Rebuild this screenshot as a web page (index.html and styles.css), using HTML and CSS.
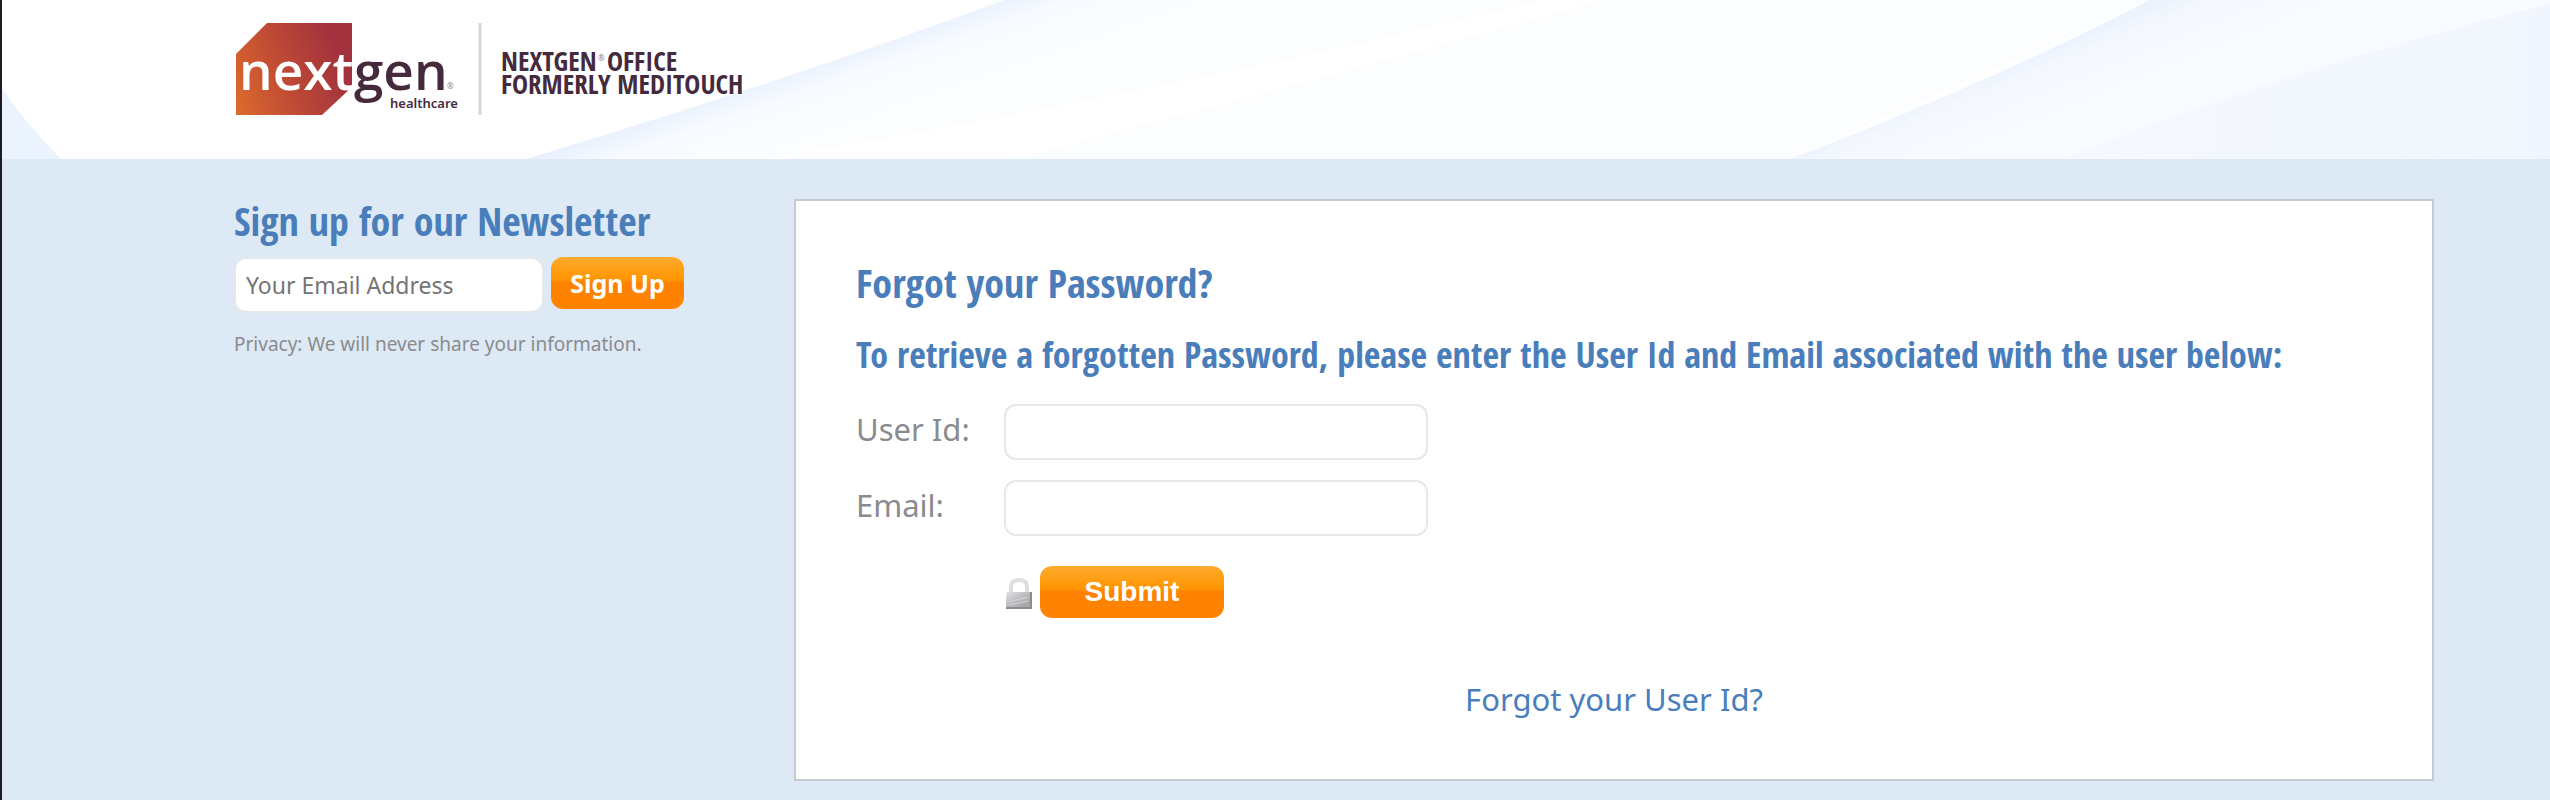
FILE: index.html
```
<!DOCTYPE html>
<html lang="en">
<head>
  <meta charset="UTF-8">
  <meta name="viewport" content="width=device-width, initial-scale=1">
  <title>Forgot your Password?</title>
  <link rel="stylesheet" href="styles.css">
</head>
<body>
  <header class="header">
    <!-- Light blue rays behind the logo -->
    <svg class="rays" viewBox="0 0 2548 159" preserveAspectRatio="none" aria-hidden="true">
      <defs>
        <linearGradient id="rayOne" gradientUnits="userSpaceOnUse" x1="760" y1="78" x2="785" y2="150">
          <stop offset="0" stop-color="#e8f1fe"/>
          <stop offset="0.35" stop-color="#f7faff"/>
          <stop offset="1" stop-color="#fcfdff"/>
        </linearGradient>
        <linearGradient id="rayTwo" gradientUnits="userSpaceOnUse" x1="1965" y1="79" x2="1990" y2="140">
          <stop offset="0" stop-color="#ebf2fe"/>
          <stop offset="0.3" stop-color="#f4f8fe"/>
          <stop offset="1" stop-color="#f8fbff"/>
        </linearGradient>
        <linearGradient id="rayThree" x1="0" y1="0" x2="1" y2="0">
          <stop offset="0" stop-color="#f5f9fe"/>
          <stop offset="1" stop-color="#f1f6fe"/>
        </linearGradient>
      </defs>
      <path d="M0 88 Q22 122 59 159 H0Z" fill="#ebf3ff"/>
      <path d="M524 159 Q780 82 1003 0 H1540 Q1180 90 760 159Z" fill="url(#rayOne)"/>
      <path d="M1010 159 Q1310 82 1600 0 H2148 L1788 159Z" fill="#fcfdff"/>
      <path d="M1788 159 Q1990 82 2148 0 H2548 V159Z" fill="url(#rayTwo)"/>
      <path d="M2060 159 Q2280 70 2548 4 V159Z" fill="url(#rayThree)"/>
    </svg>
    <svg class="logo" viewBox="0 0 520 93" role="img" aria-label="NextGen Healthcare">
      <defs>
        <linearGradient id="logoFill" x1="0" y1="1" x2="1" y2="0.7">
          <stop offset="0" stop-color="#dd6c2d"/>
          <stop offset="0.5" stop-color="#bf4a35"/>
          <stop offset="1" stop-color="#a2323d"/>
        </linearGradient>
      </defs>
      <path d="M31 0H116V64L86 92H0V31Z" fill="url(#logoFill)"/>
      <text class="logo-next" x="3" y="67">next</text>
      <text class="logo-gen" x="118" y="67">gen</text>
      <text class="logo-reg" x="211" y="66">®</text>
      <text class="logo-sub" x="154" y="85">healthcare</text>
      <path d="M244 0V92" stroke="#d9d3d8" stroke-width="3"/>
      <text class="logo-name" x="265" y="48">NEXTGEN</text>
      <text class="logo-reg" x="362" y="38">®</text>
      <text class="logo-name" x="371" y="48">OFFICE</text>
      <text class="logo-name" x="265" y="71">FORMERLY MEDITOUCH</text>
    </svg>
  </header>

  <div class="page">
    <aside class="newsletter">
      <h2>Sign up for our Newsletter</h2>
      <form class="signup">
        <input type="email" class="field" placeholder="Your Email Address" aria-label="Your Email Address">
        <button type="button" class="button">Sign Up</button>
      </form>
      <p class="privacy">Privacy: We will never share your information.</p>
    </aside>

    <main class="panel">
      <h2>Forgot your Password?</h2>
      <h3>To retrieve a forgotten Password, please enter the User Id and Email associated with the user below:</h3>
      <form class="retrieve">
        <label for="userId">User Id:</label>
        <input type="text" class="field" id="userId">
        <label for="email">Email:</label>
        <input type="text" class="field" id="email">
        <div class="actions">
          <svg class="lock" viewBox="0 0 30 34" aria-hidden="true">
            <defs>
              <linearGradient id="lockFill" x1="0" y1="0" x2="1" y2="1">
                <stop offset="0" stop-color="#e2e2e4"/>
                <stop offset="0.5" stop-color="#bcbcc0"/>
                <stop offset="1" stop-color="#a0a0a4"/>
              </linearGradient>
            </defs>
            <path d="M7 16V10Q7 3 15 3T23 10V16" fill="none" stroke="#dedee0" stroke-width="4"/>
            <path d="M3 15H28V32H2Z" fill="#8c8c90"/>
            <path d="M3 15H26V30H2Z" fill="url(#lockFill)"/>
            <path d="M5 25L24 20M5 28L24 24" stroke="#d4d4d6" stroke-width="1"/>
          </svg>
          <button type="button" class="button submit">Submit</button>
        </div>
      </form>
      <a class="forgot-id" href="#">Forgot your User Id?</a>
    </main>
  </div>
</body>
</html>
```
FILE: styles.css
```
* {
  box-sizing: border-box;
}
body {
  margin: 0;
  min-height: 100vh;
  border-left: 2px solid #1c1c22;
  background-color: #dde9f4;
  color: #8a8b8e;
  font-family: "Noto Sans", sans-serif;
}
h2,
h3 {
  margin: 0;
  color: #4a7ebb;
  font-family: "Open Sans Condensed", "Noto Sans Condensed", "Liberation Sans Narrow", "Noto Sans", sans-serif;
  font-weight: bold;
}
h2 {
  font-size: 40px;
  line-height: 48px;
}
h3 {
  font-size: 36px;
  line-height: 48px;
}

/* Header */
.header {
  position: relative;
  padding: 23px 0 43px 234px;
  background-color: #fff;
}
.rays {
  position: absolute;
  inset: 0;
  width: 100%;
  height: 100%;
}
.logo {
  position: relative;
  display: block;
  width: 520px;
  height: 93px;
}
.logo-next,
.logo-gen {
  font-family: "Open Sans", sans-serif;
  font-size: 53px;
  font-weight: 600;
}
.logo-next {
  fill: #fff;
}
.logo-gen,
.logo-sub,
.logo-name {
  fill: #452a3d;
}
.logo-reg {
  fill: #8d7f8a;
  font-size: 8px;
}
.logo-sub {
  font-size: 13px;
  font-weight: 600;
}
.logo-name {
  font-family: "Open Sans Condensed", "Liberation Sans Narrow", "Open Sans", sans-serif;
  font-size: 27px;
  font-weight: bold;
}

/* Two columns */
.page {
  display: grid;
  grid-template-columns: 560px 1fr;
  align-items: start;
  padding: 40px 116px 19px 232px;
}
.field {
  height: 56px;
  padding: 0 10px;
  border: 2px solid #e6e7e9;
  border-radius: 12px;
  background-color: #fff;
  font-family: inherit;
  font-size: 23px;
}
.field::placeholder {
  color: #757575;
}
.button {
  height: 52px;
  padding: 0;
  border: none;
  border-radius: 12px;
  background: linear-gradient(#ffab2e, #ff9500 44%, #ff8200 50%, #ff8200);
  color: #fff;
  font-family: inherit;
  font-size: 25px;
  font-weight: bold;
  cursor: pointer;
}

/* Newsletter */
.newsletter h2 {
  line-height: 44px;
}
.signup {
  display: flex;
  align-items: flex-start;
  gap: 7px;
  margin-top: 14px;
}
.signup .field {
  width: 310px;
}
.signup .button {
  width: 133px;
}
.privacy {
  margin: 17px 0 0;
  font-size: 19px;
  line-height: 28px;
}

/* Password form */
.panel {
  padding: 58px 60px;
  border: 2px solid #c6cacf;
  background-color: #fff;
}
.panel h3 {
  margin-top: 24px;
}
.retrieve {
  display: grid;
  grid-template-columns: 148px 424px;
  row-gap: 20px;
  margin-top: 25px;
  font-size: 31px;
  line-height: 50px;
}
.actions {
  display: flex;
  grid-column: 2;
  gap: 6px;
  margin-top: 10px;
}
.lock {
  width: 30px;
  height: 34px;
  margin-top: 11px;
}
.submit {
  width: 184px;
  font-family: "Liberation Sans", Arial, sans-serif;
  font-size: 28px;
}
.forgot-id {
  display: block;
  margin-top: 59px;
  color: #4a7ebb;
  font-size: 31px;
  line-height: 44px;
  text-align: center;
  text-decoration: none;
}
```
